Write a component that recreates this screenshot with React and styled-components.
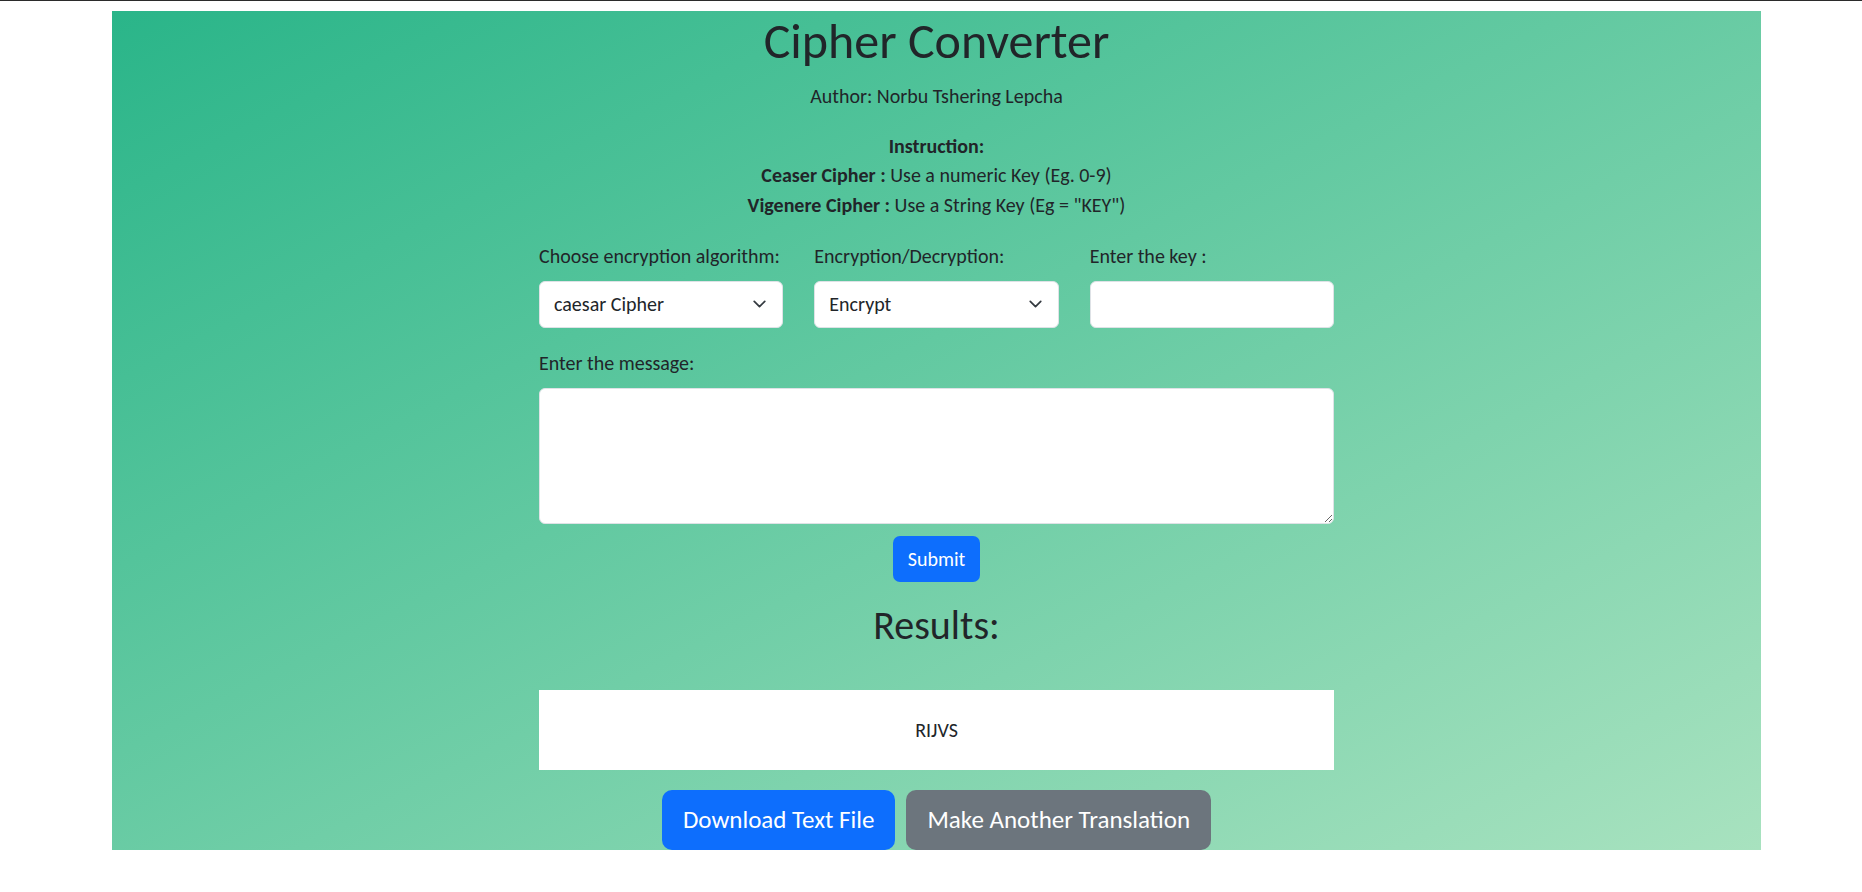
import React from 'react';
import styled, { createGlobalStyle } from 'styled-components';

const GlobalStyle = createGlobalStyle`
  body {
    margin: 0;
    border-top: 1px solid #2b2b2b;
    font-family: Carlito, Lato, "Open Sans", sans-serif;
    color: #212529;
    background: #fff;
  }
`;

const Page = styled.div`
  padding-top: 10px;
  padding-bottom: 40px;
`;

const Panel = styled.main`
  margin-left: 112px;
  width: 1649px;
  background: linear-gradient(to bottom right, #2ab589, #a8e2bf);
  display: flex;
  flex-direction: column;
  align-items: center;
  text-align: center;
`;

const Title = styled.h1`
  margin: 0;
  font-size: 50px;
  font-weight: 400;
  line-height: 60px;
`;

const Author = styled.p`
  margin: 10px 0 0;
  font-size: 20px;
  line-height: 30px;
`;

const Instructions = styled.div`
  margin-top: 21px;
  font-size: 20px;
  line-height: 29.3px;
`;

const Form = styled.form`
  width: 795px;
  margin-top: 22px;
  text-align: left;
`;

const FieldRow = styled.div`
  display: grid;
  grid-template-columns: repeat(3, 1fr);
  gap: 31px;
`;

const Label = styled.label`
  display: block;
  margin-top: ${(p) => p.$top || 0}px;
  margin-bottom: 10px;
  font-size: 20px;
  line-height: 29px;
`;

const SelectWrap = styled.div`
  position: relative;
`;

const Select = styled.select`
  appearance: none;
  width: 100%;
  height: 47px;
  padding: 0 40px 0 14px;
  border: 1px solid #dee2e6;
  border-radius: 6px;
  background: #fff;
  color: #212529;
  font: inherit;
  font-size: 20px;
`;

const Chevron = styled.svg`
  position: absolute;
  right: 14px;
  top: 16px;
  width: 19px;
  height: 14px;
  pointer-events: none;
`;

const Input = styled.input`
  width: 100%;
  height: 47px;
  box-sizing: border-box;
  padding: 0 14px;
  border: 1px solid #dee2e6;
  border-radius: 6px;
  font: inherit;
  font-size: 20px;
`;

const TextArea = styled.textarea`
  display: block;
  width: 100%;
  height: 136px;
  box-sizing: border-box;
  padding: 7px 14px;
  border: 1px solid #dee2e6;
  border-radius: 6px;
  font: inherit;
  font-size: 20px;
`;

const SubmitButton = styled.button`
  display: block;
  margin: 12px auto 0;
  height: 46px;
  padding: 0 15px;
  border: none;
  border-radius: 7px;
  background: #0d6efd;
  color: #fff;
  font: inherit;
  font-size: 20px;
`;

const ResultsHeading = styled.h2`
  margin: 20px 0 0;
  font-size: 40px;
  font-weight: 400;
  line-height: 48px;
`;

const ResultBox = styled.div`
  width: 795px;
  height: 80px;
  margin-top: 40px;
  background: #fff;
  display: flex;
  align-items: center;
  justify-content: center;
  font-size: 20px;
`;

const ButtonRow = styled.div`
  display: flex;
  gap: 11px;
  justify-content: center;
  margin-top: 20px;
`;

const BigButton = styled.button`
  height: 60px;
  padding: 0 21px;
  border: none;
  border-radius: 10px;
  background: ${(p) => (p.$variant === 'secondary' ? '#6c757d' : '#0d6efd')};
  color: #fff;
  font: inherit;
  font-size: 25px;
`;

function ChevronIcon() {
  return (
    <Chevron viewBox="0 0 16 16" fill="none">
      <path d="m2 5 6 6 6-6" stroke="#343a40" strokeWidth="2" strokeLinecap="round" strokeLinejoin="round" />
    </Chevron>
  );
}

export default function App() {
  return (
    <>
      <GlobalStyle />
      <Page>
        <Panel>
          <Title>Cipher Converter</Title>
          <Author>Author: Norbu Tshering Lepcha</Author>
          <Instructions>
            <b>Instruction:</b>
            <br />
            <b>Ceaser Cipher :</b> Use a numeric Key (Eg. 0-9)
            <br />
            <b>Vigenere Cipher :</b> Use a String Key (Eg = "KEY")
          </Instructions>
          <Form onSubmit={(e) => e.preventDefault()}>
            <FieldRow>
              <div>
                <Label>Choose encryption algorithm:</Label>
                <SelectWrap>
                  <Select defaultValue="caesar">
                    <option value="caesar">caesar Cipher</option>
                    <option value="vigenere">vigenere Cipher</option>
                  </Select>
                  <ChevronIcon />
                </SelectWrap>
              </div>
              <div>
                <Label>Encryption/Decryption:</Label>
                <SelectWrap>
                  <Select defaultValue="encrypt">
                    <option value="encrypt">Encrypt</option>
                    <option value="decrypt">Decrypt</option>
                  </Select>
                  <ChevronIcon />
                </SelectWrap>
              </div>
              <div>
                <Label>Enter the key :</Label>
                <Input type="text" />
              </div>
            </FieldRow>
            <Label $top={21}>Enter the message:</Label>
            <TextArea />
            <SubmitButton type="submit">Submit</SubmitButton>
          </Form>
          <ResultsHeading>Results:</ResultsHeading>
          <ResultBox>RIJVS</ResultBox>
          <ButtonRow>
            <BigButton>Download Text File</BigButton>
            <BigButton $variant="secondary">Make Another Translation</BigButton>
          </ButtonRow>
        </Panel>
      </Page>
    </>
  );
}
